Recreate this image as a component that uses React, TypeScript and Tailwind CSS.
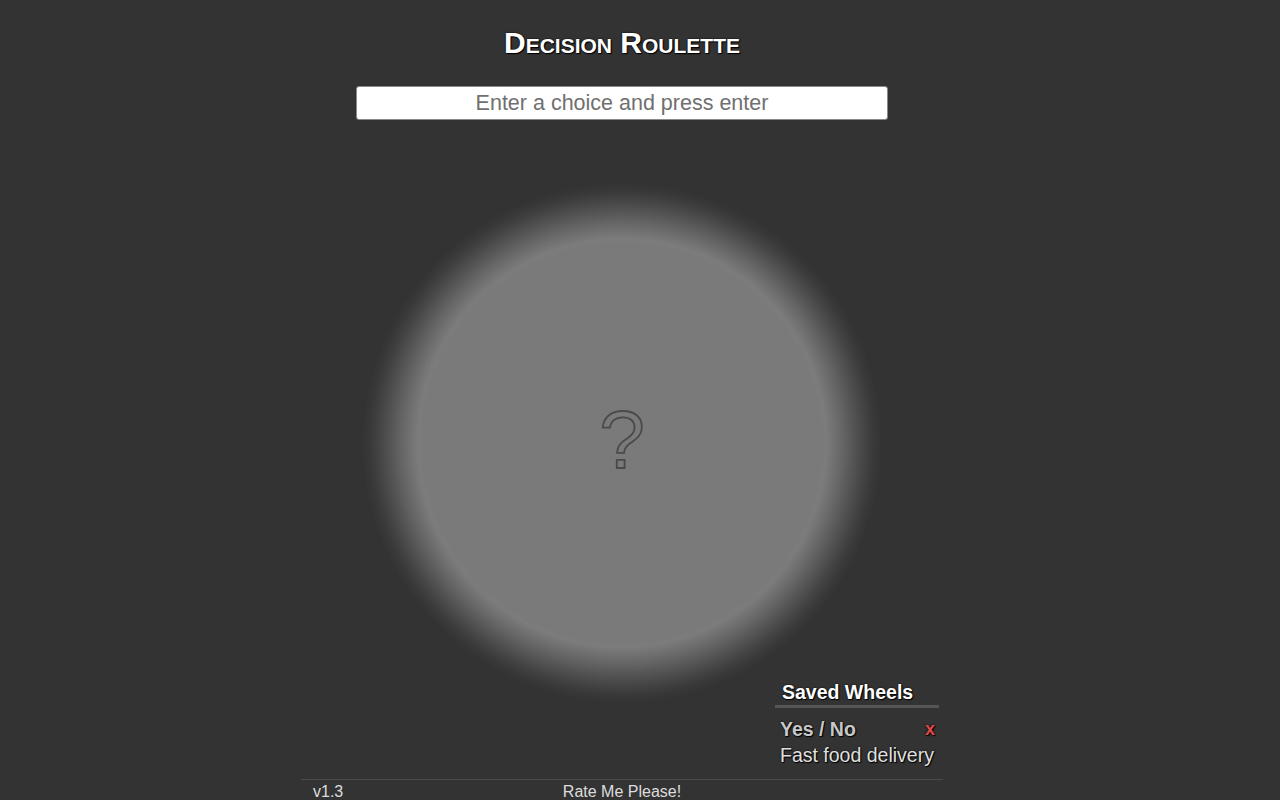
import React from "react";

const shadow = "[text-shadow:0_0_2px_#000,1px_1px_1px_#000]";

function SavedWheels() {
  const wheels = [
    { name: "Yes / No", active: true },
    { name: "Fast food delivery", active: false },
  ];
  return (
    <div className="ml-auto mr-[4px] w-[164px]">
      <div className={`pl-[7px] text-[19.5px] font-bold leading-[22px] text-white ${shadow}`}>
        Saved Wheels
      </div>
      <div className="mt-[2px] h-[3px] bg-[#555555]" />
      <ul className="mt-[8px]">
        {wheels.map((w) => (
          <li key={w.name} className="flex items-center justify-between pl-[5px] pr-[4px] text-[19.5px] leading-[26px]">
            <span className={`${w.active ? "font-bold text-[#c8c8c8]" : "text-[#e0e0e0]"} ${shadow}`}>{w.name}</span>
            {w.active && <span className={`text-[18px] font-bold text-[#e04a4a] ${shadow}`}>x</span>}
          </li>
        ))}
      </ul>
    </div>
  );
}

export default function App() {
  return (
    <main className="min-h-screen w-full bg-[#333333] pr-[36px] font-['Liberation_Sans',Arial,sans-serif]">
      <div className="mx-auto flex w-[642px] flex-col">
        <h1 className={`mt-[25px] text-center text-[30px] font-bold leading-[36px] text-white [font-variant:small-caps] ${shadow}`}>
          Decision Roulette
        </h1>

        <div className="mt-[25px] flex justify-center">
          <input
            type="text"
            placeholder="Enter a choice and press enter"
            className="h-[34px] w-[532px] rounded-[3px] border border-[#8a8a8a] bg-white text-center text-[21.5px] text-[#333] outline-none placeholder:text-[#707070]"
          />
        </div>

        <div className="mt-[63px] flex justify-center">
          <div className="flex h-[520px] w-[520px] items-center justify-center rounded-full bg-[radial-gradient(circle,#7a7a7a_0px,#7a7a7a_200px,#7c7c7c_204px,#747474_210px,#666666_220px,#545454_232px,#444444_243px,#393939_252px,#333333_260px)]">
            <span className="mb-[6px] text-[82px] leading-none text-transparent [-webkit-text-stroke:1.8px_#4a4a4a]">?</span>
          </div>
        </div>

        <div className="-mt-[22px]">
          <SavedWheels />
        </div>

        <footer className="mt-[11px] grid grid-cols-3 border-t border-[#4a4a4a] pt-[2px] text-[16px] leading-[20px] text-[#dddddd]">
          <span className="pl-[12px]">v1.3</span>
          <span className="text-center">Rate Me Please!</span>
          <span />
        </footer>
      </div>
    </main>
  );
}
